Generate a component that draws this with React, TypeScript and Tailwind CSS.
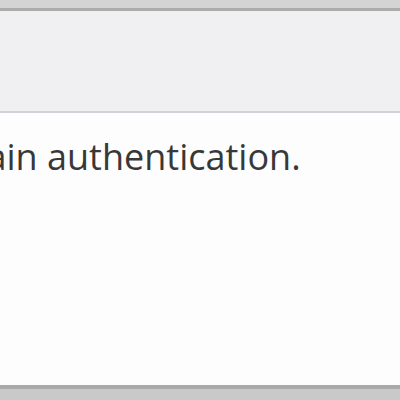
export default function App() {
  return (
    <div className="w-[400px] h-[400px] overflow-hidden bg-[#c9c9c9] flex flex-col font-['Open_Sans',sans-serif]">
      <div className="h-[8px] bg-[#d4d4d4] shrink-0" />
      <div className="h-[3px] bg-[#acacac] shrink-0" />
      <div className="h-[100px] bg-[#f0f0f2] shrink-0" />
      <div className="h-[2px] bg-[#cfd3d8] shrink-0" />
      <div className="h-[272px] bg-[#fdfdfd] shrink-0 overflow-hidden">
        <p className="whitespace-nowrap mt-[22px] ml-[-70px] text-[36px] leading-[44px] text-[#383838]">
          obtain authentication.
        </p>
      </div>
      <div className="h-[4px] bg-[#a9a9a9] shrink-0" />
    </div>
  );
}
